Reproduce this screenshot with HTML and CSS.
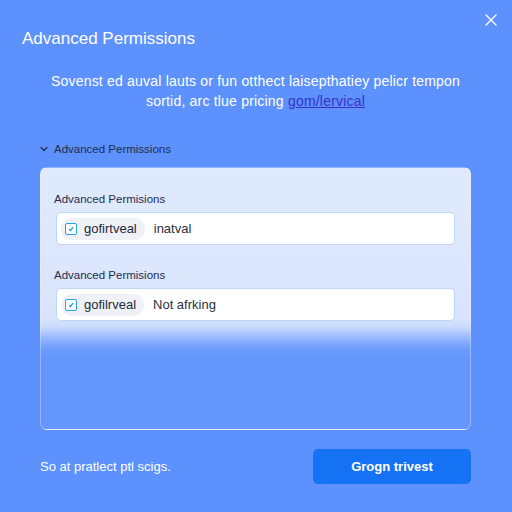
FILE: index.html
```html
<!DOCTYPE html>
<html>
<head>
<meta charset="utf-8">
<link rel="stylesheet" href="styles.css">
</head>
<body>
<div class="dialog">
  <div class="header">
    <h1 class="title">Advanced Permissions</h1>
    <button class="close" aria-label="Close">
      <svg width="12" height="12" viewBox="0 0 12 12"><path d="M1 1L11 11M11 1L1 11" stroke="#fff" stroke-width="1.4" stroke-linecap="round"/></svg>
    </button>
  </div>
  <p class="desc">Sovenst ed auval lauts or fun otthect laisepthatiey pelicr tempon<br>sortid, arc tlue pricing <a href="#" class="link">gom/lervical</a></p>
  <div class="toggle">
    <svg class="chev" width="8" height="6" viewBox="0 0 8 6"><path d="M1 1.5L4 4.5L7 1.5" fill="none" stroke="#1f2d4d" stroke-width="1.2" stroke-linecap="round" stroke-linejoin="round"/></svg>
    <span>Advanced Permissions</span>
  </div>
  <div class="card">
    <div class="field">
      <div class="label">Advanced Permisions</div>
      <div class="input">
        <span class="chip"><span class="check"><svg width="8" height="8" viewBox="0 0 8 8"><path d="M2.5 4.5L3.6 5.6L5.8 2.4" fill="none" stroke="#1a9ad8" stroke-width="1.2" stroke-linecap="round"/></svg></span>gofirtveal</span>
        <span class="value">inatval</span>
      </div>
    </div>
    <div class="field">
      <div class="label">Advanced Permisions</div>
      <div class="input">
        <span class="chip"><span class="check"><svg width="8" height="8" viewBox="0 0 8 8"><path d="M2.5 4.5L3.6 5.6L5.8 2.4" fill="none" stroke="#1a9ad8" stroke-width="1.2" stroke-linecap="round"/></svg></span>gofilrveal</span>
        <span class="value">Not afrking</span>
      </div>
    </div>
  </div>
  <div class="footer">
    <span class="note">So at pratlect ptl scigs.</span>
    <button class="primary">Grogn trivest</button>
  </div>
</div>
</body>
</html>
```
FILE: styles.css
```css
html, body {
  margin: 0;
  padding: 0;
}
body {
  width: 512px;
  height: 512px;
  overflow: hidden;
  background: #5d91fd;
  font-family: "Liberation Sans", Arial, sans-serif;
}
.dialog {
  display: flex;
  flex-direction: column;
  padding: 0 41px 0 40px;
  height: 512px;
  box-sizing: border-box;
  background: #5d91fd;
}
.header {
  display: flex;
  justify-content: space-between;
  align-items: flex-start;
  margin: 0 -26px 0 -18px;
}
.title {
  margin: 28px 0 0 0;
  font-size: 17px;
  line-height: 21px;
  font-weight: 400;
  color: #fff;
}
.close {
  margin-top: 14px;
  width: 12px;
  height: 12px;
  padding: 0;
  border: 0;
  background: none;
  display: flex;
}
.desc {
  margin: 22px -20px 0 -20px;
  text-align: center;
  color: #fff;
  font-size: 14px;
  letter-spacing: 0.2px;
  line-height: 20px;
  font-weight: 500;
}
.link {
  color: #3930c8;
  text-decoration: underline;
}
.toggle {
  margin-top: 30px;
  display: flex;
  align-items: center;
  gap: 6px;
  font-size: 11.5px;
  line-height: 16px;
  color: #1f2d4d;
}
.card {
  margin-top: 10px;
  height: 263px;
  box-sizing: border-box;
  border-radius: 7px;
  border: 1px solid rgba(255,255,255,0.3);
  padding: 23px 15px 0 15px;
  display: flex;
  flex-direction: column;
  gap: 22px;
  background: linear-gradient(to bottom,
    #e0eafd 0px,
    #d9e5fd 150px,
    #c6d9fd 160px,
    #8db1fd 172px,
    #6a9bfd 182px,
    rgba(255,255,255,0.05) 192px,
    rgba(255,255,255,0.05) 100%);
}
.field {
  display: flex;
  flex-direction: column;
  gap: 5px;
}
.label {
  margin-left: -2px;
  font-size: 11.5px;
  line-height: 16px;
  color: #1f2d4d;
}
.input {
  height: 33px;
  box-sizing: border-box;
  background: #fff;
  border: 1px solid #c4d4f6;
  border-radius: 5px;
  display: flex;
  align-items: center;
  padding-left: 4px;
  gap: 9px;
}
.chip {
  display: flex;
  align-items: center;
  gap: 7px;
  height: 22px;
  padding: 0 8px 0 4px;
  border-radius: 11px;
  background: #eff1f6;
  font-size: 13px;
  color: #222a38;
}
.check {
  width: 12px;
  height: 12px;
  box-sizing: border-box;
  border: 1.5px solid #22a6e2;
  border-radius: 2px;
  display: flex;
  align-items: center;
  justify-content: center;
  background: #fff;
}
.value {
  font-size: 13px;
  color: #2a3140;
}
.footer {
  margin-top: 19px;
  display: flex;
  justify-content: space-between;
  align-items: center;
}
.note {
  color: #fff;
  font-size: 13px;
}
.primary {
  width: 158px;
  height: 35px;
  border: 0;
  border-radius: 5px;
  background: #1672f4;
  color: #fff;
  font-family: "Liberation Sans", Arial, sans-serif;
  font-size: 13px;
  font-weight: 700;
}
```
